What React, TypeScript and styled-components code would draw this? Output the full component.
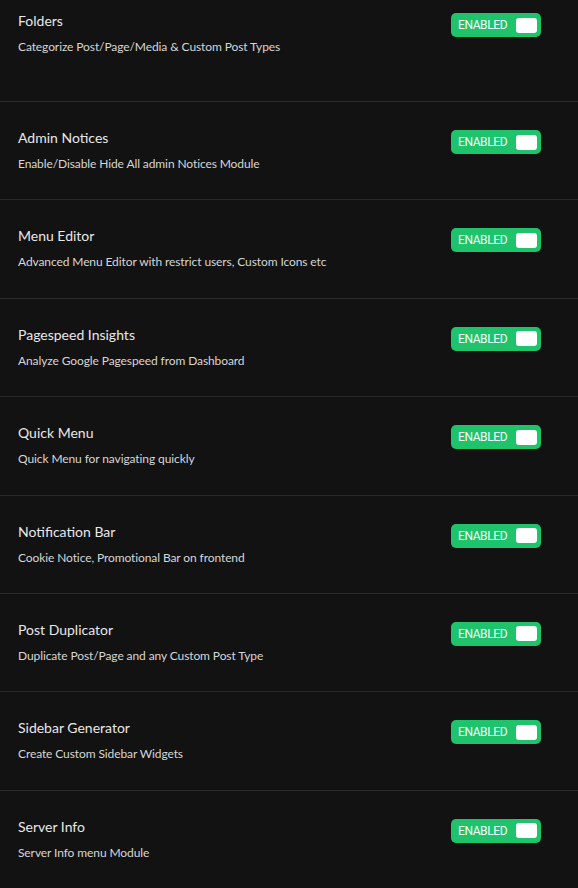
import styled, { createGlobalStyle } from "styled-components";

const GlobalStyle = createGlobalStyle`
  html, body {
    margin: 0;
    padding: 0;
    background: #121212;
  }
  body {
    font-family: Lato, "Noto Sans", sans-serif;
    overflow: hidden;
  }
`;

const modules = [
  { title: "Folders", desc: "Categorize Post/Page/Media & Custom Post Types" },
  { title: "Admin Notices", desc: "Enable/Disable Hide All admin Notices Module" },
  { title: "Menu Editor", desc: "Advanced Menu Editor with restrict users, Custom Icons etc" },
  { title: "Pagespeed Insights", desc: "Analyze Google Pagespeed from Dashboard" },
  { title: "Quick Menu", desc: "Quick Menu for navigating quickly" },
  { title: "Notification Bar", desc: "Cookie Notice, Promotional Bar on frontend" },
  { title: "Post Duplicator", desc: "Duplicate Post/Page and any Custom Post Type" },
  { title: "Sidebar Generator", desc: "Create Custom Sidebar Widgets" },
  { title: "Server Info", desc: "Server Info menu Module" },
];

const List = styled.div`
  width: 578px;
  background: #121212;
`;

// the first row is cut at the top of the shot, so it gets its own height
const Row = styled.div<{ $first?: boolean }>`
  display: flex;
  justify-content: space-between;
  align-items: flex-start;
  box-sizing: border-box;
  height: ${(p) => (p.$first ? "102px" : "98.4px")};
  padding: ${(p) => (p.$first ? "11px" : "26px")} 37px 0 18px;
  border-bottom: 1px solid #2a2a2a;
`;

const Info = styled.div`
  display: flex;
  flex-direction: column;
  gap: 6px;
`;

const Title = styled.div`
  font-size: 14px;
  line-height: 20px;
  color: #e8e8e8;
`;

const Desc = styled.div`
  font-size: 12px;
  line-height: 20px;
  letter-spacing: -0.1px;
  color: #d6d6d6;
`;

const Toggle = styled.div`
  margin-top: 2px;
  width: 90px;
  height: 24px;
  box-sizing: border-box;
  border-radius: 5px;
  background: #1fc36b;
  display: flex;
  align-items: center;
  justify-content: space-between;
  padding: 0 4px 0 7px;
`;

const Label = styled.span`
  font-family: Roboto, "Liberation Sans", sans-serif;
  font-size: 12px;
  letter-spacing: -0.4px;
  color: #f4fff8;
`;

const Knob = styled.span`
  width: 21px;
  height: 15px;
  border-radius: 3px;
  background: #ffffff;
`;

export default function App() {
  return (
    <List>
      <GlobalStyle />
      {modules.map((m, i) => (
        <Row key={m.title} $first={i === 0}>
          <Info>
            <Title>{m.title}</Title>
            <Desc>{m.desc}</Desc>
          </Info>
          <Toggle>
            <Label>ENABLED</Label>
            <Knob />
          </Toggle>
        </Row>
      ))}
    </List>
  );
}
